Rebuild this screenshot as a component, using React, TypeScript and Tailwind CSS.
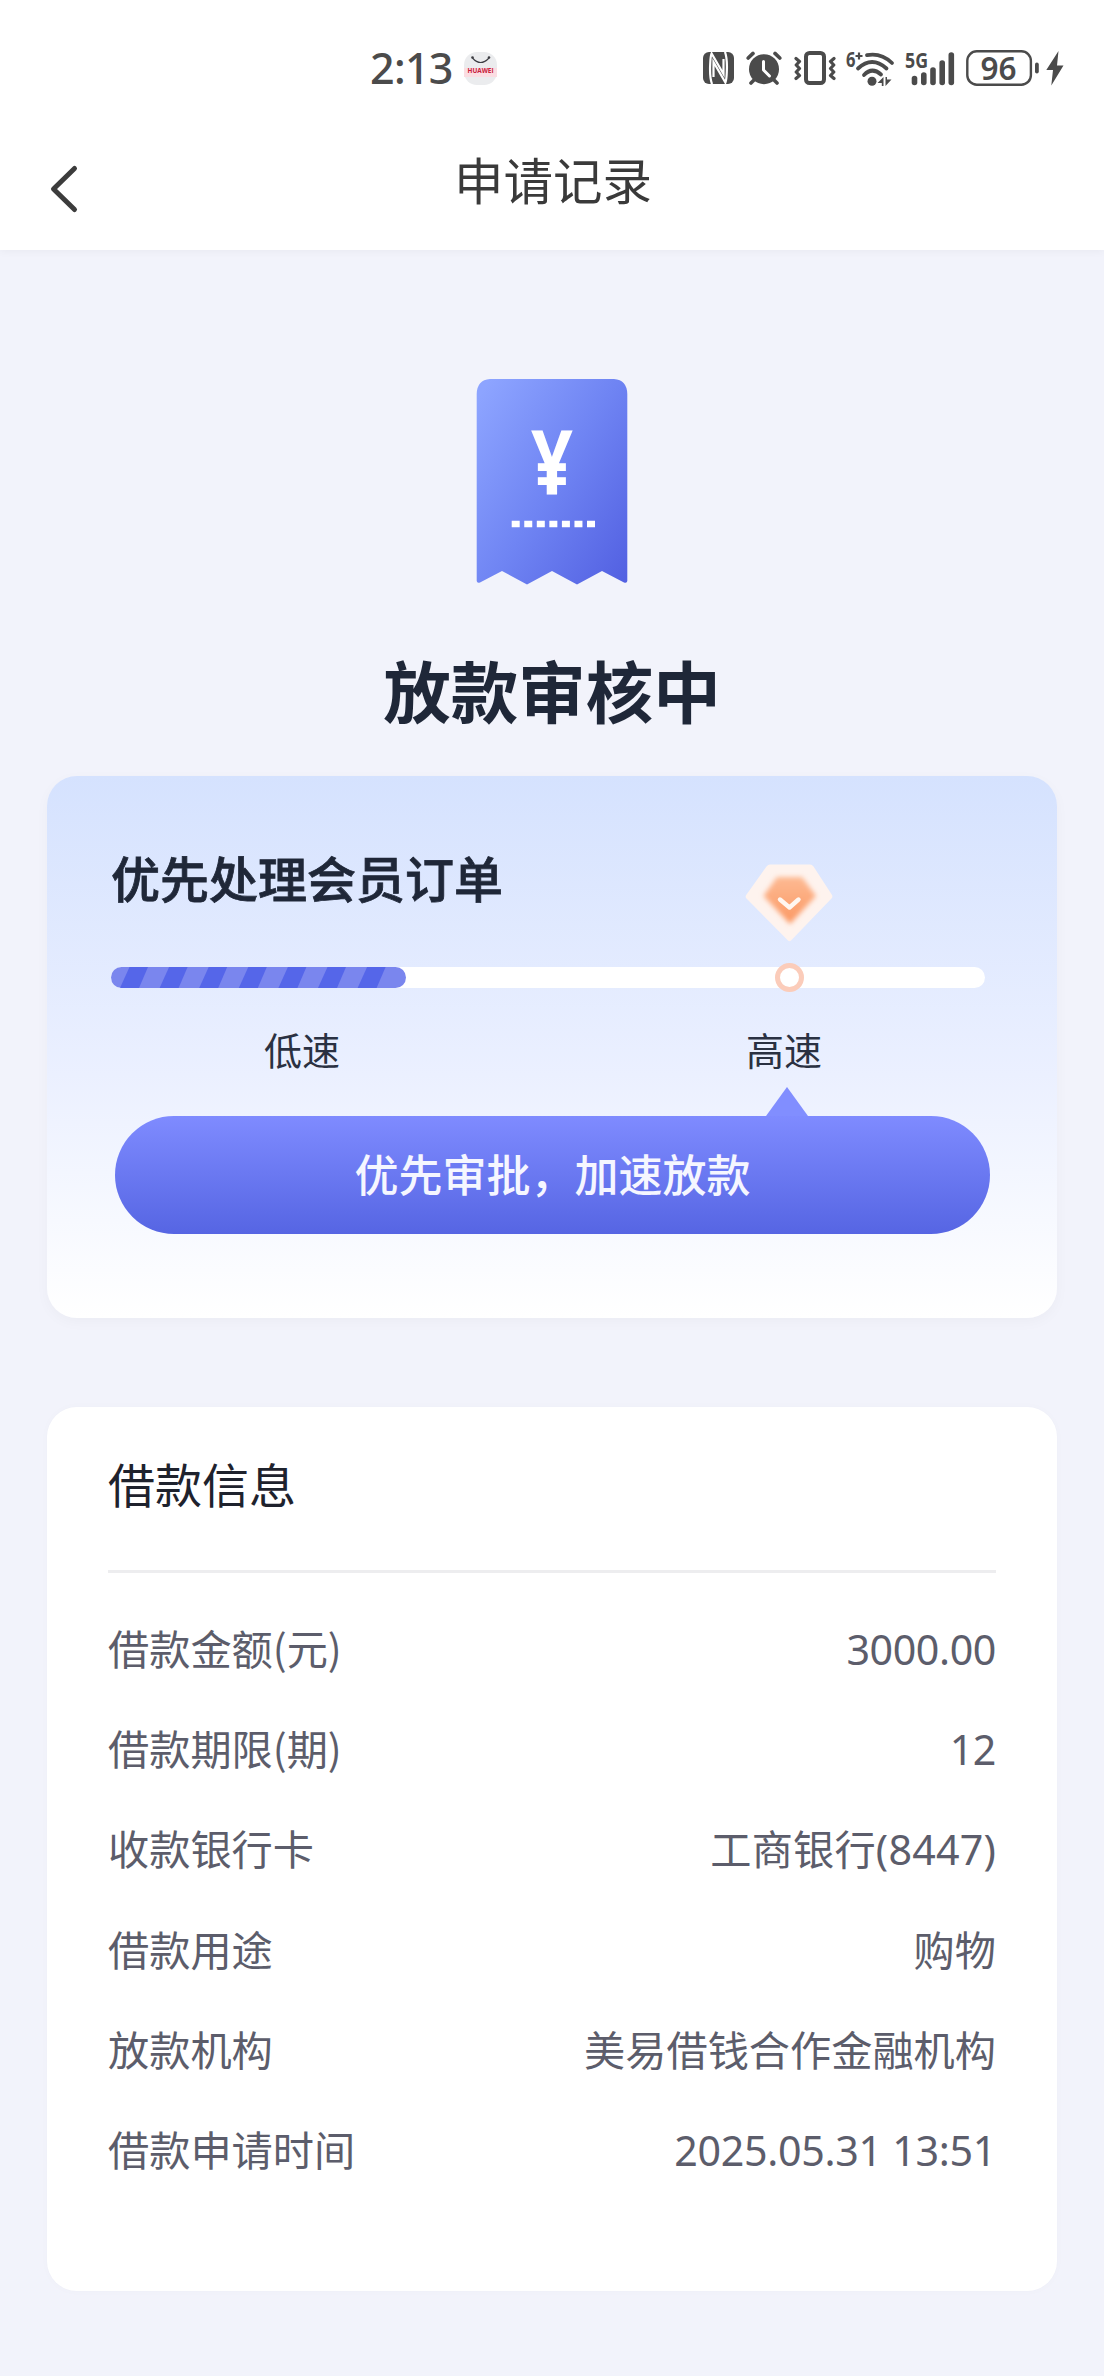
import React from "react";

const loanInfo = [
  { label: "借款金额(元)", value: "3000.00", spacing: "tracking-[-0.4px]" },
  { label: "借款期限(期)", value: "12", spacing: "tracking-[-0.4px]" },
  { label: "收款银行卡", value: "工商银行(8447)", spacing: "tracking-[0.2px]" },
  { label: "借款用途", value: "购物", spacing: "tracking-normal" },
  { label: "放款机构", value: "美易借钱合作金融机构", spacing: "tracking-normal" },
  { label: "借款申请时间", value: "2025.05.31 13:51", spacing: "tracking-[-0.3px]" },
];

const StoreBadge = () => (
  <svg width="33" height="33" viewBox="0 0 33 33">
    <rect width="33" height="33" rx="13" fill="#ebecee" />
    <rect y="16" width="33" height="9" fill="#fbdde2" />
    <path d="M8.5 6 Q16.5 15 25 6" fill="none" stroke="#3c3c42" strokeWidth="1.2" />
    <circle cx="8.5" cy="5.5" r="1.3" fill="#3c3c42" />
    <circle cx="25" cy="5.5" r="1.3" fill="#3c3c42" />
    <text
      x="16.5"
      y="21"
      textAnchor="middle"
      textLength="26"
      lengthAdjust="spacingAndGlyphs"
      className="font-['Open_Sans'] text-[7px] font-bold"
      fill="#c8203c"
    >
      HUAWEI
    </text>
  </svg>
);

const NfcIcon = () => (
  <svg width="31" height="32" viewBox="0 0 31 32">
    <rect width="31" height="32" rx="6" fill="#4b4b4b" />
    <g fill="none" stroke="#fff" strokeWidth="2.2">
      <path d="M9 32 Q6.5 25 7.2 12 Q7.5 4 8.6 1.5 L20.5 22 V7" />
      <path d="M22 0 Q24.5 7 23.8 20 Q23.5 28 22.4 30.5 L10.5 10 V25" />
    </g>
  </svg>
);

const AlarmIcon = () => (
  <svg width="36" height="34" viewBox="0 0 36 34">
    <g stroke="#4b4b4b" strokeWidth="3.6" strokeLinecap="round">
      <path d="M2.2 7 L7 2.4" />
      <path d="M33.8 7 L29 2.4" />
      <path d="M5 32 L9 28" />
      <path d="M31 32 L27 28" />
    </g>
    <circle cx="18" cy="18.2" r="15" fill="#4b4b4b" />
    <path
      d="M17.5 10.5 V19 L23.5 25"
      fill="none"
      stroke="#fff"
      strokeWidth="3"
      strokeLinecap="round"
      strokeLinejoin="round"
    />
  </svg>
);

const VibrateIcon = () => (
  <svg width="42" height="34" viewBox="0 0 42 34">
    <rect x="12" y="2" width="18" height="30" rx="3.5" fill="none" stroke="#4b4b4b" strokeWidth="4" />
    <g
      fill="none"
      stroke="#4b4b4b"
      strokeWidth="3.2"
      strokeLinecap="round"
      strokeLinejoin="round"
    >
      <path d="M2 7.5 L5.5 10.5 L2.2 14 L5.5 17.5 L2.2 21 L5.5 24.5 L2 27.5" />
      <path d="M40 7.5 L36.5 10.5 L39.8 14 L36.5 17.5 L39.8 21 L36.5 24.5 L40 27.5" />
    </g>
  </svg>
);

const WifiIcon = () => (
  <svg width="49" height="37" viewBox="0 0 49 37" className="overflow-visible">
    <text
      x="0"
      y="17"
      textLength="9.5"
      lengthAdjust="spacingAndGlyphs"
      className="font-['Noto_Sans'] text-[22px] font-bold"
      fill="#4b4b4b"
    >
      6
    </text>
    <path d="M9.5 6 H16.5 M13 2.5 V9.5" stroke="#4b4b4b" strokeWidth="2.2" />
    <g fill="none" stroke="#4b4b4b" strokeWidth="3.8" strokeLinecap="round">
      <path d="M21 5.2 Q35 2.5 46 13" />
      <path d="M12 18.5 Q26 5.5 40.5 18.5" />
      <path d="M18 25 Q26 16.5 35 24.5" />
    </g>
    <circle cx="26" cy="31.3" r="4.5" fill="#4b4b4b" />
    <path d="M37.5 27 V36 H35.8 V33 H31.5 Z M39.5 36 V27 H41 V29.5 H45.5 Z" fill="#4b4b4b" />
  </svg>
);

const SignalIcon = () => (
  <svg width="50" height="35" viewBox="0 0 50 35" className="overflow-visible">
    <text
      x="0"
      y="17"
      textLength="23"
      lengthAdjust="spacingAndGlyphs"
      className="font-['Noto_Sans'] text-[22px] font-bold"
      fill="#4b4b4b"
    >
      5G
    </text>
    <g stroke="#4b4b4b" strokeWidth="5.6" strokeLinecap="round">
      <path d="M9.5 27.5 V31.5" />
      <path d="M18.8 24 V31.5" />
      <path d="M28 19 V31.5" />
      <path d="M37.2 12 V31.5" />
      <path d="M46.3 4 V31.5" />
    </g>
  </svg>
);

const BatteryIcon = () => (
  <svg width="98" height="36" viewBox="0 0 98 36" className="overflow-visible">
    <rect x="1.3" y="1.3" width="63.6" height="33.4" rx="9.5" fill="none" stroke="#4b4b4b" strokeWidth="2.4" />
    <text
      x="32.5"
      y="29.5"
      textAnchor="middle"
      textLength="36"
      lengthAdjust="spacingAndGlyphs"
      className="font-['Noto_Sans'] text-[32px] font-semibold"
      fill="#4b4b4b"
    >
      96
    </text>
    <rect x="69" y="12.5" width="3.8" height="11" rx="1.9" fill="#4b4b4b" />
    <path d="M92.5 1 L80.3 20 H87 L85.3 35.5 L97.5 15.5 H91 Z" fill="#4b4b4b" />
  </svg>
);

const ReceiptIcon = () => (
  <svg width="152" height="206" viewBox="0 0 152 206">
    <defs>
      <linearGradient id="receipt" x1="0" y1="0.1" x2="1" y2="0.95">
        <stop offset="0" stopColor="#8da4ff" />
        <stop offset="0.5" stopColor="#6f84f3" />
        <stop offset="1" stopColor="#5361e2" />
      </linearGradient>
    </defs>
    <path
      d="M14 0 H138 Q151 1 151.3 15 V202 Q151 204.5 148 203.5 L126 192 L101 205.5 L76 192 L51 205.5 L26 192 L4 203.5 Q1 204.5 0.7 202 V15 Q1 1 14 0 Z"
      fill="url(#receipt)"
    />
    <text
      x="76"
      y="115.5"
      textAnchor="middle"
      textLength="42"
      lengthAdjust="spacingAndGlyphs"
      className="font-['Noto_Sans'] text-[90px] font-bold"
      fill="#fff"
    >
      ¥
    </text>
    <path d="M35.7 145 H120" stroke="#fff" strokeWidth="6.6" strokeDasharray="8 4.55" />
  </svg>
);

const DiamondIcon = () => (
  <svg width="88" height="78" viewBox="0 0 88 78">
    <defs>
      <linearGradient id="gem" x1="0" y1="0" x2="0" y2="1">
        <stop offset="0" stopColor="#fdba93" />
        <stop offset="1" stopColor="#fc9863" />
      </linearGradient>
      <filter id="soft" x="-20%" y="-20%" width="140%" height="140%">
        <feGaussianBlur stdDeviation="2.6" />
      </filter>
    </defs>
    <path
      d="M25 0.5 H65 Q67 0.7 68.5 2.5 L87 31 Q88 33 86.5 34.5 L46 76.5 Q44.5 77.8 43 76.5 L1.5 34.5 Q0 33 1.2 31 L21.5 2.5 Q23 0.7 25 0.5 Z"
      fill="#fef3ee"
    />
    <path d="M32 13 H57 L71 32 L45 60 L18.5 32 Z" fill="url(#gem)" filter="url(#soft)" />
    <path
      d="M35 35.5 L44.5 43.5 L53.5 35.5"
      fill="none"
      stroke="#fff7f1"
      strokeWidth="4.4"
      strokeLinecap="round"
      strokeLinejoin="round"
    />
  </svg>
);

const stripes = [0, 1, 2, 3, 4, 5, 6];

const ProgressFill = () => (
  <svg width="295" height="21" viewBox="0 0 295 21" className="block rounded-full">
    <rect width="295" height="21" fill="#7a86ee" />
    {stripes.map((i) => (
      <polygon
        key={i}
        points="18.5,0 37,0 28,21 9,21"
        fill="#5566e9"
        transform={`translate(${i * 39.6} 0)`}
      />
    ))}
  </svg>
);

export default function App() {
  return (
    <div className="h-[2376px] w-[1104px] overflow-hidden bg-[#f2f3fb] font-['Noto_Sans','Noto_Sans_CJK_SC',sans-serif]">
      {/* Status bar + nav */}
      <header className="relative h-[250px] bg-white shadow-[0_2px_8px_rgba(0,0,0,0.04)]">
        <div className="flex h-[136px] items-center pr-10 pl-[370px] text-[#4b4b4b]">
          <span className="w-[94px] pb-0.5 text-[43px] leading-none font-medium tracking-[-0.7px]">
            2:13
          </span>
          <StoreBadge />
          <div className="ml-auto flex items-center">
            <NfcIcon />
            <div className="ml-3">
              <AlarmIcon />
            </div>
            <div className="ml-3">
              <VibrateIcon />
            </div>
            <div className="ml-2.5">
              <WifiIcon />
            </div>
            <div className="ml-2.5">
              <SignalIcon />
            </div>
            <div className="ml-[11px]">
              <BatteryIcon />
            </div>
          </div>
        </div>
        <div className="grid grid-cols-[1fr_auto_1fr] items-start pl-12">
          <svg width="32" height="50" viewBox="0 0 32 50" className="mt-7">
            <path
              d="M26.5 4.5 L5.5 25 L26.5 45.5"
              fill="none"
              stroke="#3c3c3c"
              strokeWidth="5"
              strokeLinecap="round"
              strokeLinejoin="round"
            />
          </svg>
          <h1 className="mt-5 mr-[46px] text-[49.5px] leading-[50px] text-[#3a3a3a]">申请记录</h1>
        </div>
      </header>

      <main className="flex flex-col items-center pt-[129px]">
        <ReceiptIcon />
        <h2 className="mt-[72px] text-[67.5px] leading-[70px] font-bold text-[#1f2738]">放款审核中</h2>

        {/* Priority card */}
        <section className="mt-[49px] h-[542px] w-[1010px] rounded-[30px] bg-linear-to-b from-[#d5e2fe] via-[#ebf0ff] via-55% to-white px-16 pt-[78px] shadow-[0_4px_14px_rgba(0,0,0,0.03)]">
          <h3 className="text-[49px] leading-[50px] font-medium text-[#1f2738] [-webkit-text-stroke:0.8px_#1f2738]">
            优先处理会员订单
          </h3>
          <div className="relative mt-[63px] h-[21px] w-[874px] rounded-full bg-white">
            <ProgressFill />
            <div className="absolute -top-[103px] left-[634px]">
              <DiamondIcon />
            </div>
            <div className="absolute -top-1 left-[664px] h-[29px] w-[29px] rounded-full border-[5.5px] border-[#fbccba] bg-white" />
          </div>
          <div className="mt-[42px] flex pl-[153px] text-[38px] leading-[40px] text-[#2a3142]">
            <span className="w-[482px]">低速</span>
            <span>高速</span>
          </div>
          <svg width="42" height="29" viewBox="0 0 42 29" className="mt-[17px] ml-[655px] block">
            <path d="M21 0 L42 29 H0 Z" fill="#818eff" />
          </svg>
          <button className="ml-1 flex h-[118px] w-[875px] items-center justify-center rounded-full bg-linear-to-b from-[#7f8bff] to-[#5665e3] text-[44px] font-medium text-[#f5f6ff]">
            优先审批，加速放款
          </button>
        </section>

        {/* Loan info card */}
        <section className="mt-[89px] h-[884px] w-[1010px] rounded-[30px] bg-white px-[61px] pt-[53px] shadow-[0_0_10px_rgba(0,0,0,0.02)]">
          <h3 className="h-[113px] border-b-3 border-[#ededef] text-[47px] leading-[50px] text-[#1e222d]">
            借款信息
          </h3>
          <dl className="mt-[26px] text-[41.2px] leading-[50px] text-[#5c5d6b]">
            {loanInfo.map((row) => (
              <div key={row.label} className="flex h-[100.2px] items-center justify-between">
                <dt className="pb-1 font-['Noto_Sans_CJK_SC',sans-serif]">{row.label}</dt>
                <dd className={row.spacing}>{row.value}</dd>
              </div>
            ))}
          </dl>
        </section>
      </main>
    </div>
  );
}
